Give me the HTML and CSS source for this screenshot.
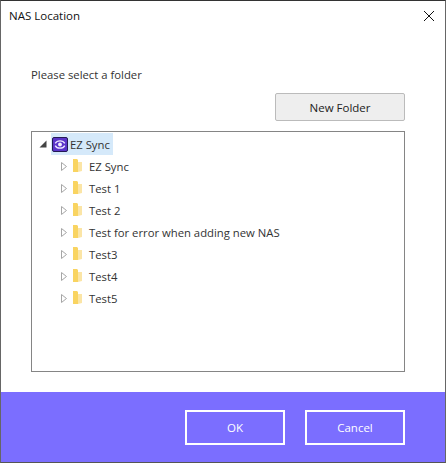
FILE: index.html
```html
<!DOCTYPE html>
<html lang="en">
<head>
<meta charset="utf-8">
<title>NAS Location</title>
<link rel="stylesheet" href="styles.css">
</head>
<body>
<div class="window">
  <header class="titlebar">
    <span class="title">NAS Location</span>
    <svg class="close" width="10" height="10" viewBox="0 0 10 10"><path d="M0 0L10 10M10 0L0 10" stroke="#111" stroke-width="1" fill="none"/></svg>
  </header>
  <main class="content">
    <p class="prompt">Please select a folder</p>
    <div class="toolbar"><button class="new-folder">New Folder</button></div>
    <div class="tree">
      <div class="root">
        <svg class="expander" width="8" height="8" viewBox="0 0 8 8"><path d="M7.5 .5V7.500H.5Z" fill="#444"/></svg>
        <span class="root-label">
          <svg class="app-icon" width="16" height="15" viewBox="0 0 16 15"><rect x=".5" y=".5" width="15" height="14" rx="1.5" fill="#5a34c9" stroke="#231a55"/><path d="M3.200 6.400C5 3 11 3 12.800 6.400M3.200 8.600C5 12 11 12 12.800 8.600" fill="none" stroke="#ece8ff" stroke-width="1.3"/><circle cx="8" cy="7.500" r="1.900" fill="#f4f1ff"/></svg>
          <span>EZ Sync</span>
        </span>
      </div>
      <ul class="children">
        <li class="node"><svg class="arrow" width="6" height="9" viewBox="0 0 6 9"><path d="M.5 .5L5.500 4.500L.5 8.500Z" fill="#fff" stroke="#a6a6a6"/></svg><svg class="folder" width="14" height="16" viewBox="0 0 14 16"><path d="M3 1H7L8 2V14H3Z" fill="#f9d461"/><path d="M8 4H12V13L8 14Z" fill="#fbe5a6"/></svg><span>EZ Sync</span></li>
        <li class="node"><svg class="arrow" width="6" height="9" viewBox="0 0 6 9"><path d="M.5 .5L5.500 4.500L.5 8.500Z" fill="#fff" stroke="#a6a6a6"/></svg><svg class="folder" width="14" height="16" viewBox="0 0 14 16"><path d="M3 1H7L8 2V14H3Z" fill="#f9d461"/><path d="M8 4H12V13L8 14Z" fill="#fbe5a6"/></svg><span>Test 1</span></li>
        <li class="node"><svg class="arrow" width="6" height="9" viewBox="0 0 6 9"><path d="M.5 .5L5.500 4.500L.5 8.500Z" fill="#fff" stroke="#a6a6a6"/></svg><svg class="folder" width="14" height="16" viewBox="0 0 14 16"><path d="M3 1H7L8 2V14H3Z" fill="#f9d461"/><path d="M8 4H12V13L8 14Z" fill="#fbe5a6"/></svg><span>Test 2</span></li>
        <li class="node"><svg class="arrow" width="6" height="9" viewBox="0 0 6 9"><path d="M.5 .5L5.500 4.500L.5 8.500Z" fill="#fff" stroke="#a6a6a6"/></svg><svg class="folder" width="14" height="16" viewBox="0 0 14 16"><path d="M3 1H7L8 2V14H3Z" fill="#f9d461"/><path d="M8 4H12V13L8 14Z" fill="#fbe5a6"/></svg><span>Test for error when adding new NAS</span></li>
        <li class="node"><svg class="arrow" width="6" height="9" viewBox="0 0 6 9"><path d="M.5 .5L5.500 4.500L.5 8.500Z" fill="#fff" stroke="#a6a6a6"/></svg><svg class="folder" width="14" height="16" viewBox="0 0 14 16"><path d="M3 1H7L8 2V14H3Z" fill="#f9d461"/><path d="M8 4H12V13L8 14Z" fill="#fbe5a6"/></svg><span>Test3</span></li>
        <li class="node"><svg class="arrow" width="6" height="9" viewBox="0 0 6 9"><path d="M.5 .5L5.500 4.500L.5 8.500Z" fill="#fff" stroke="#a6a6a6"/></svg><svg class="folder" width="14" height="16" viewBox="0 0 14 16"><path d="M3 1H7L8 2V14H3Z" fill="#f9d461"/><path d="M8 4H12V13L8 14Z" fill="#fbe5a6"/></svg><span>Test4</span></li>
        <li class="node"><svg class="arrow" width="6" height="9" viewBox="0 0 6 9"><path d="M.5 .5L5.500 4.500L.5 8.500Z" fill="#fff" stroke="#a6a6a6"/></svg><svg class="folder" width="14" height="16" viewBox="0 0 14 16"><path d="M3 1H7L8 2V14H3Z" fill="#f9d461"/><path d="M8 4H12V13L8 14Z" fill="#fbe5a6"/></svg><span>Test5</span></li>
      </ul>
    </div>
  </main>
  <footer class="footer">
    <button class="action">OK</button>
    <button class="action">Cancel</button>
  </footer>
</div>
</body>
</html>
```
FILE: styles.css
```css
* { box-sizing: border-box; }
html, body { margin: 0; padding: 0; }
body { width: 446px; height: 463px; font-family: "Open Sans", "Noto Sans", sans-serif; font-size: 11.3px; color: #222; background: #fff; }
.window { width: 446px; height: 463px; display: flex; flex-direction: column; border-left: 1px solid #666; border-right: 1px solid #666; border-top: 1px solid #333; border-bottom: 1px solid #555; }
.titlebar { height: 29px; flex: none; display: flex; align-items: center; justify-content: space-between; padding: 0 11px 0 8px; }
.title { font-size: 11.5px; color: #111; }
.content { flex: 1; display: flex; flex-direction: column; padding: 0 40px 20px 30px; }
.prompt { margin: 37px 0 0; height: 16px; line-height: 16px; color: #333; }
.toolbar { display: flex; justify-content: flex-end; margin-top: 10px; }
.new-folder { width: 130px; height: 28px; background: #eeeeee; border: 1px solid #bbb; border-radius: 2px; font: inherit; font-size: 11.5px; color: #222; padding: 0; }
.tree { margin-top: 10px; flex: 1; border: 1px solid #858585; background: #fff; padding: 1px 0 0 7px; }
.root { display: flex; align-items: center; height: 22px; }
.expander { margin-right: 4px; }
.root-label { display: flex; align-items: center; gap: 3px; height: 22px; background: #d5e9fa; padding: 0 3px 0 1px; color: #333; }
.app-icon { margin-right: -1px; }
.children { list-style: none; margin: 0; padding: 0 0 0 22px; }
.node { display: flex; align-items: center; height: 22px; color: #333; }
.arrow { margin-right: 3px; }
.folder { margin-right: 5px; }
.footer { height: 70px; flex: none; background: #7b6eff; display: flex; justify-content: flex-end; gap: 20px; padding: 18px 40px 0 0; align-items: flex-start; }
.action { width: 100px; height: 35px; background: transparent; border: 2px solid #fff; color: #fff; font: inherit; font-size: 11.5px; padding: 0; }
```
